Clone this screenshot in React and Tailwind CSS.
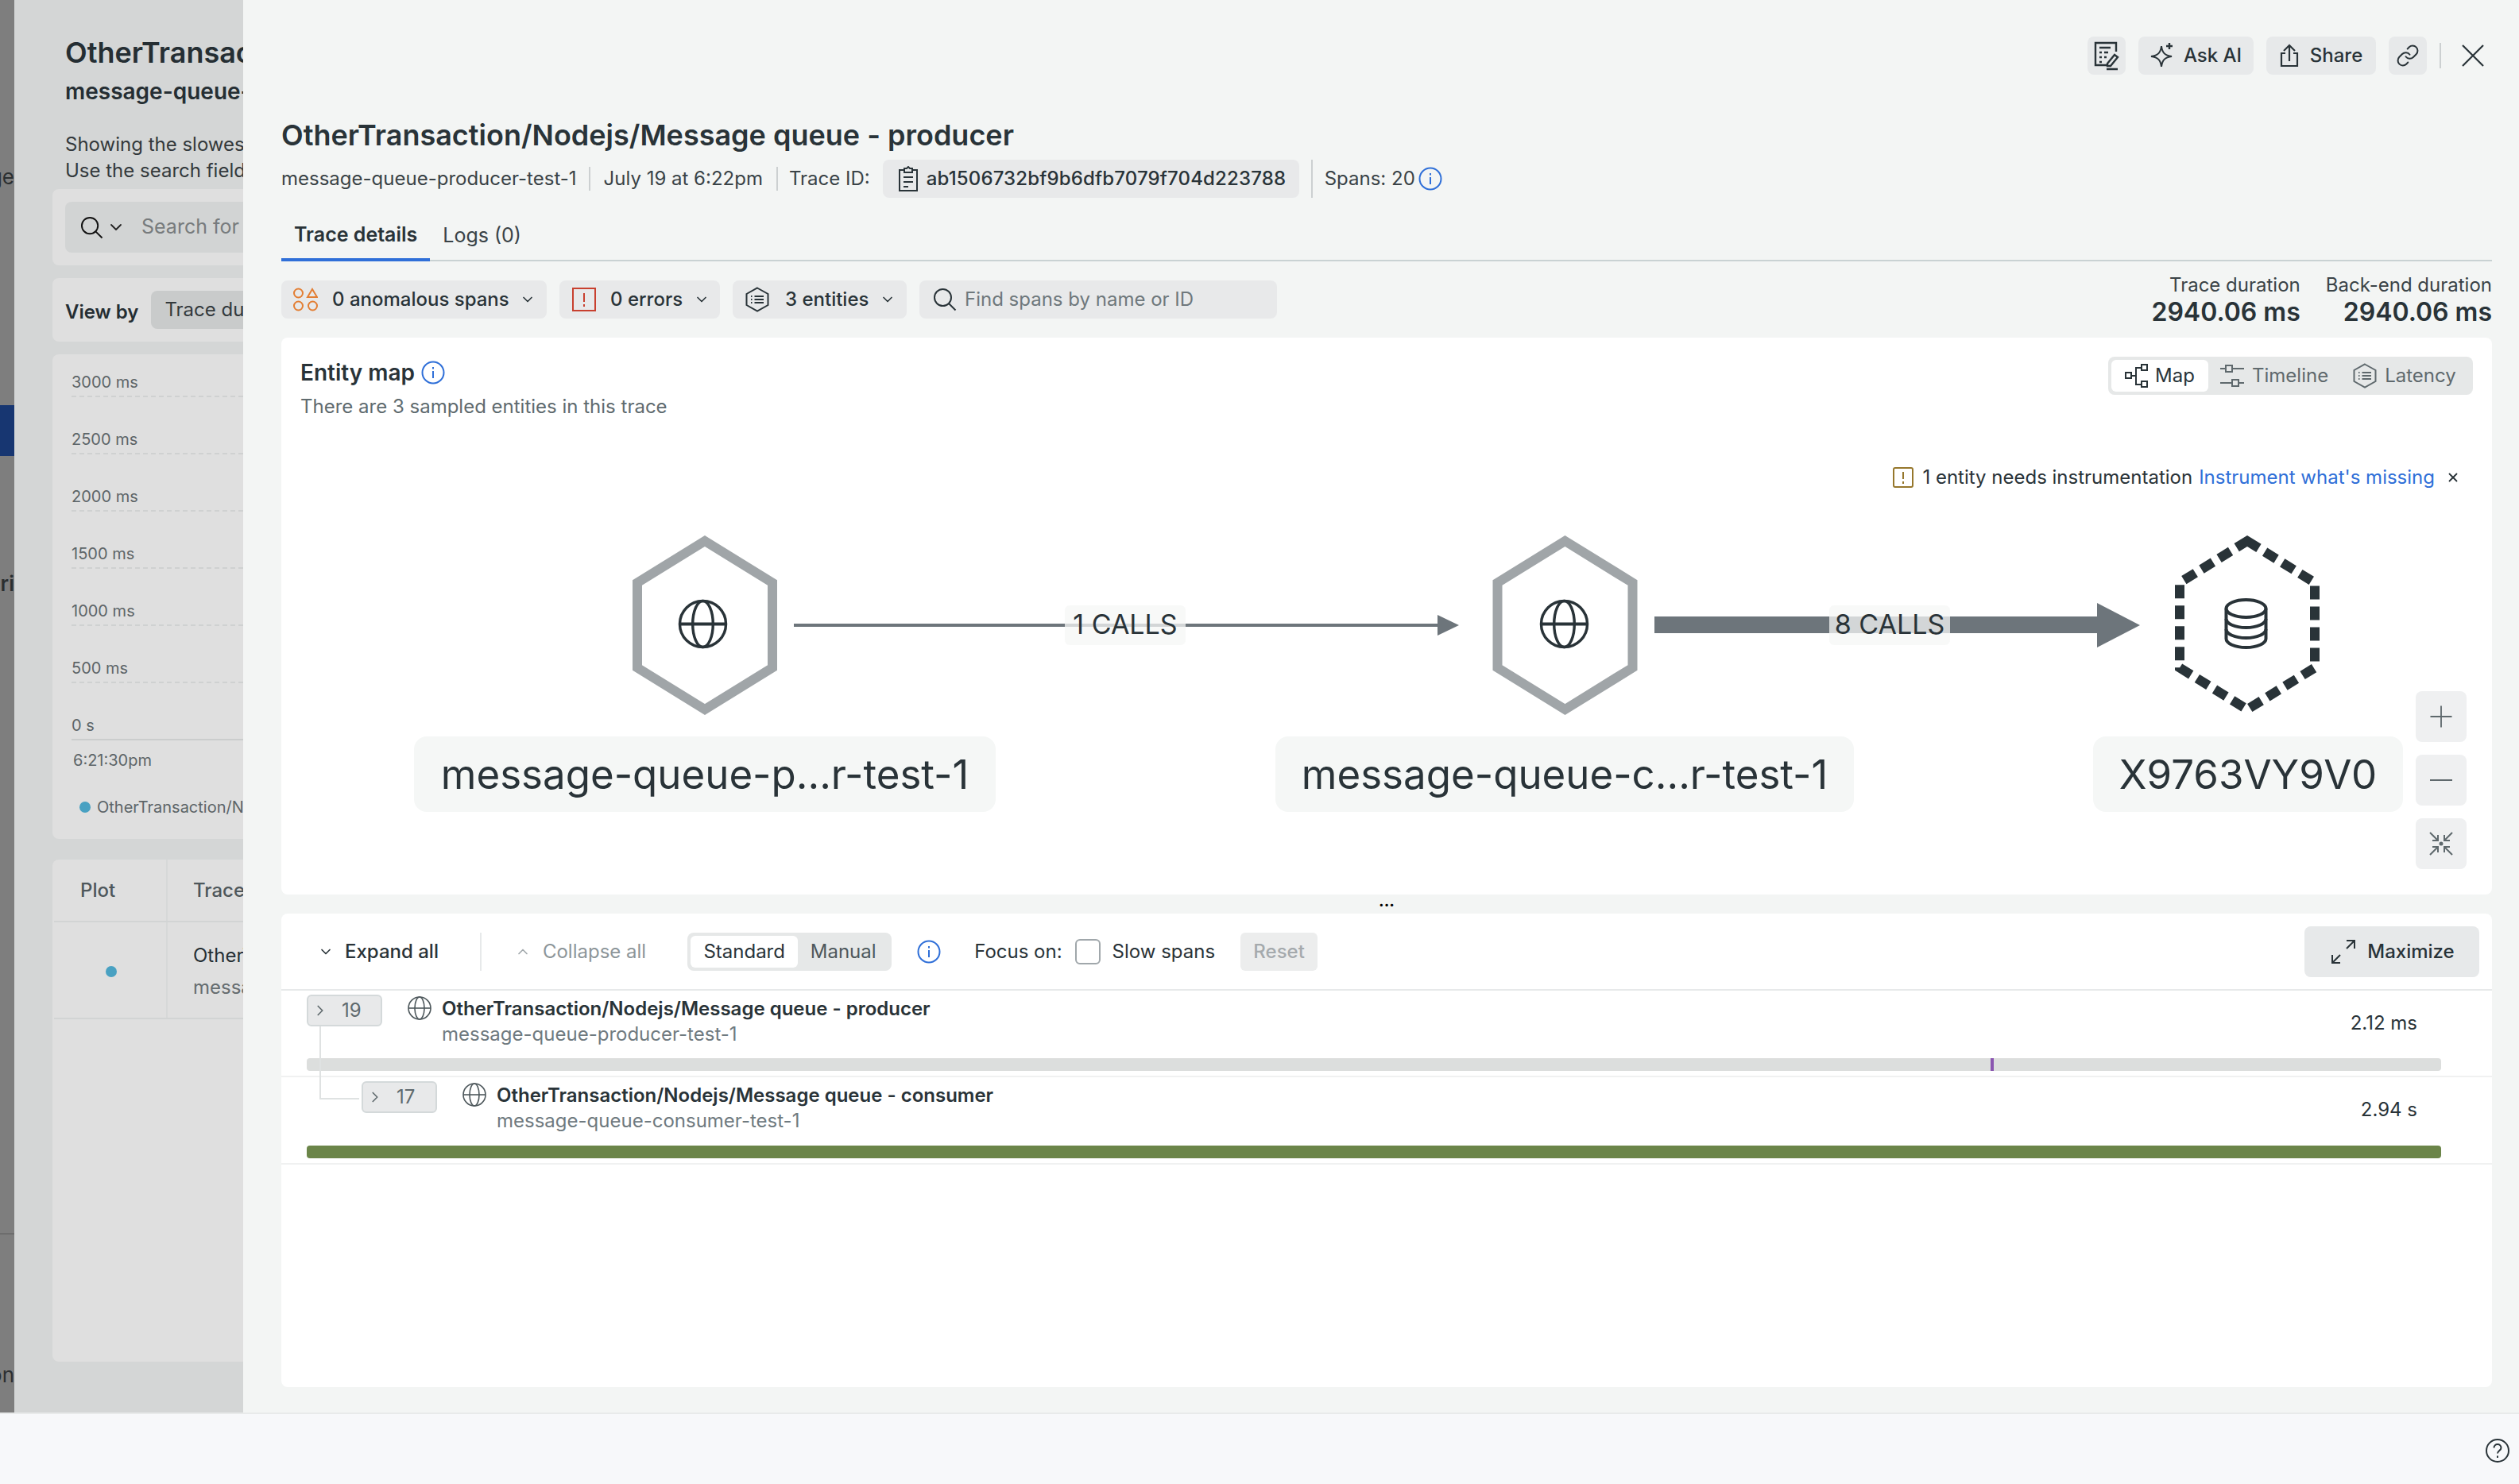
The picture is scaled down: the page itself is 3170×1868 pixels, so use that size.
import { ChevronDown, ChevronRight, ChevronUp, Link as LinkIcon, Plus, X } from "lucide-react";

const INK = "#293338";

function Globe({ size = 63, stroke = 3.5, color = INK, x = 0, y = 0 }) {
  return (
    <svg x={x} y={y} width={size} height={size} viewBox="0 0 64 64" fill="none" stroke={color} strokeWidth={stroke}>
      <circle cx="32" cy="32" r="29.5" />
      <ellipse cx="32" cy="32" rx="13" ry="29.5" />
      <path d="M2.5 32h59" strokeWidth={stroke * 1.2} />
    </svg>
  );
}

function Hexlist({ className = "h-[32px] w-[30px]", color = INK }) {
  return (
    <svg className={className} viewBox="0 0 30 32" fill="none" stroke={color} strokeWidth="2">
      <path d="M15 1.5 28.5 9v14L15 30.5 1.5 23V9z" />
      <path d="M7 12h1.5M7 16h1.5M7 20h1.5M11.5 12H23M11.5 16H23M11.5 20H23" strokeWidth="1.8" />
    </svg>
  );
}

function SearchIcon({ className = "h-[30px] w-[30px]", color = INK, stroke = 2 }) {
  return (
    <svg className={className} viewBox="0 0 30 30" fill="none" stroke={color} strokeWidth={stroke}>
      <circle cx="12.5" cy="12.5" r="10.5" />
      <path d="m20 20 8.5 8.5" />
    </svg>
  );
}

function InfoIcon({ className = "h-[30px] w-[30px]" }) {
  return (
    <svg className={className} viewBox="0 0 30 30" fill="none" stroke="#2f6fd8" strokeWidth="2">
      <circle cx="15" cy="15" r="13.5" />
      <path d="M15 13v9M15 8v2.5" />
    </svg>
  );
}

function HeaderButton({ children, className = "" }) {
  return <div className={`flex h-[48px] items-center justify-center rounded-lg bg-[#e7e9ea] text-[24px] font-medium ${className}`}>{children}</div>;
}

function FilterPill({ children, className = "" }) {
  return <div className={`flex h-[48px] items-center rounded-lg bg-[#e8e9ea] text-[24px] font-medium ${className}`}>{children}</div>;
}

function LeftPanel() {
  const ticks = ["3000 ms", "2500 ms", "2000 ms", "1500 ms", "1000 ms", "500 ms"];
  return (
    <div className="h-full w-[288px] shrink-0 overflow-hidden bg-[#d4d6d6] pl-[48px]">
      <div className="w-[900px]">
        <div className="pl-[16px]">
          <div className="mt-[44px] text-[36px] leading-[44px] font-semibold whitespace-nowrap text-[#252e33]">OtherTransaction/Nodejs/Message queue</div>
          <div className="mt-[9px] text-[28px] leading-[36px] font-semibold whitespace-nowrap text-[#252e33]">message-queue-producer-test-1</div>
          <div className="mt-[32px] text-[24px] leading-[33px] whitespace-nowrap text-[#33393c]">Showing the slowest traces</div>
          <div className="text-[24px] leading-[33px] whitespace-nowrap text-[#33393c]">Use the search field to find traces</div>
        </div>
        <div className="mt-[7px] h-[96px] rounded-l-lg bg-[#dfdfdf] pt-[16px] pl-[16px]">
          <div className="flex h-[64px] items-center rounded-l-lg bg-[#d2d4d4] pl-[19px]">
            <SearchIcon className="h-[29px] w-[29px]" color="#111" />
            <ChevronDown className="ml-[4px] h-[24px] w-[24px]" color="#222" strokeWidth={1.8} />
            <span className="ml-[20px] text-[25px] text-[#777b7d]">Search for traces</span>
          </div>
        </div>
        <div className="mt-[16px] flex h-[80px] items-center rounded-l-lg bg-[#dfdfdf] pl-[16px]">
          <span className="pt-[6px] text-[24px] font-semibold text-[#252e33]">View by</span>
          <div className="ml-[16px] flex h-[48px] flex-1 items-center rounded-lg bg-[#c9cbcb] pl-[17px] text-[24px] text-[#33393c]">Trace duration</div>
        </div>
        <div className="mt-[16px] h-[610px] rounded-l-lg bg-[#dfdfdf] pl-[24px]">
          {ticks.map((t, i) => (
            <div key={t} className={`flex flex-col justify-end border-b-2 border-dashed border-[#cfd1d1] pb-[2px] text-[20px] leading-[30px] text-[#5d6568] ${i === 0 ? "h-[54px]" : "h-[72px]"}`}>
              {t}
            </div>
          ))}
          <div className="flex h-[72px] flex-col justify-end border-b-2 border-[#cbcdcd] pb-[2px] text-[20px] leading-[30px] text-[#5d6568]">0 s</div>
          <div className="mt-[10px] pl-[2px] text-[20px] leading-[30px] text-[#5d6568]">6:21:30pm</div>
          <div className="mt-[29px] flex items-center pl-[10px] text-[20px] leading-[30px] text-[#5d6568]">
            <span className="h-[14px] w-[14px] rounded-full bg-[#49a1c2]" />
            <span className="ml-[8px]">OtherTransaction/Nodejs/Message queue</span>
          </div>
        </div>
        <div className="mt-[26px] h-[632px] rounded-l-lg bg-[#dfdfdf] pl-[2px]">
          <div className="flex h-[79px] border-b-2 border-[#d2d4d4]">
            <div className="flex w-[143px] items-center border-r-2 border-[#d6d8d8] pl-[33px] text-[24px] font-medium text-[#4e575b]">Plot</div>
            <div className="flex items-center pl-[32px] text-[24px] font-medium text-[#4e575b]">Trace</div>
          </div>
          <div className="flex h-[122px] border-b-2 border-[#d2d4d4]">
            <div className="flex w-[143px] items-center justify-center border-r-2 border-[#d6d8d8] pt-[4px] pl-[2px]">
              <span className="h-[14px] w-[14px] rounded-full bg-[#49a1c2]" />
            </div>
            <div className="pt-[22px] pl-[32px] text-[24px] leading-[40px]">
              <div className="text-[#252e33]">OtherTransaction</div>
              <div className="text-[#666d70]">message-queue</div>
            </div>
          </div>
        </div>
      </div>
    </div>
  );
}

function Backdrop() {
  return (
    <div className="flex h-full w-[18px] shrink-0 flex-col items-end overflow-hidden bg-[#7e7e7e] text-[26px] leading-[32px] text-[#2b2f31]">
      <div className="mt-[207px] h-[32px]">age</div>
      <div className="mt-[271px] h-[64px] w-full shrink-0 bg-[#173671]" />
      <div className="mt-[145px] h-[32px] font-semibold">ori</div>
      <div className="mt-[801px] h-[2px] w-full shrink-0 bg-[#6d6d6d]" />
      <div className="mt-[161px] h-[32px]">on</div>
    </div>
  );
}

function DrawerHeader() {
  return (
    <div className="flex h-[48px] items-center justify-end pr-[10px]">
      <HeaderButton className="w-[48px]">
        <svg className="h-[38px] w-[32px]" viewBox="0 0 32 38" fill="none" stroke={INK} strokeWidth="2.4">
          <path d="M28 14V3H2v28h14M7 9h14M7 15h3M13 15h5M7 21h3M13 21h3M7 27h3" />
          <path d="m17 29 9-11 4 3-9 11h-4zM16 36h14" />
        </svg>
      </HeaderButton>
      <HeaderButton className="ml-[16px] w-[145px] gap-[12px]">
        <svg className="h-[34px] w-[30px]" viewBox="0 0 30 34" fill="none" stroke={INK} strokeWidth="2">
          <path d="M14 5c1 8 4 12 13 13-9 1-12 5-13 13-1-8-4-12-13-13 9-1 12-5 13-13z" />
          <path d="M24 1v8M20 5h8" strokeWidth="2.4" />
        </svg>
        Ask AI
      </HeaderButton>
      <HeaderButton className="ml-[16px] w-[138px] gap-[14px]">
        <svg className="h-[30px] w-[24px]" viewBox="0 0 24 30" fill="none" stroke={INK} strokeWidth="2.2">
          <path d="M7 12H2v16h20V12h-5M12 22V2M5 9l7-7 7 7" />
        </svg>
        Share
      </HeaderButton>
      <HeaderButton className="ml-[16px] w-[48px]">
        <LinkIcon className="h-[30px] w-[30px]" color={INK} strokeWidth={1.6} />
      </HeaderButton>
      <span className="ml-[16px] h-[32px] border-l-2 border-[#ccd0d1]" />
      <svg className="ml-[26px] h-[28px] w-[28px]" viewBox="0 0 28 28" fill="none" stroke={INK} strokeWidth="2.2">
        <path d="m1 1 26 26M27 1 1 27" />
      </svg>
    </div>
  );
}

function TraceMeta() {
  return (
    <div className="mt-[9px] flex h-[48px] items-center text-[24px] text-[#3a4347]">
      <span>message-queue-producer-test-1</span>
      <span className="ml-[15px] h-[30px] border-l-2 border-[#ccd0d1]" />
      <span className="ml-[17px]">July 19 at 6:22pm</span>
      <span className="ml-[17px] h-[30px] border-l-2 border-[#ccd0d1]" />
      <span className="ml-[14px]">Trace ID:</span>
      <div className="ml-[16px] flex h-[48px] w-[524px] items-center rounded-lg bg-[#e8e9ea] pl-[20px] font-medium tracking-[0.15px] text-[#293338]">
        <svg className="h-[32px] w-[24px]" viewBox="0 0 24 32" fill="none" stroke={INK} strokeWidth="2">
          <path d="M7 5H1v26h22V5h-6M7 3h3l2-2 2 2h3v5H7zM6 14h12M6 20h12M6 26h6" />
        </svg>
        <span className="ml-[11px]">ab1506732bf9b6dfb7079f704d223788</span>
      </div>
      <span className="ml-[15px] h-[48px] border-l-2 border-[#ccd0d1]" />
      <span className="ml-[15px]">Spans: 20</span>
      <InfoIcon className="ml-[4px] h-[30px] w-[30px]" />
    </div>
  );
}

function Tabs() {
  return (
    <div className="mt-[16px] flex h-[64px] border-b-2 border-[#c9d2d3] pt-[1px] text-[25px]">
      <div className="-mb-[2px] flex items-center border-b-4 border-[#2f6fd8] px-[16px] font-semibold text-[#293338]">Trace details</div>
      <div className="flex items-center px-[16px] text-[#3a4347]">Logs (0)</div>
    </div>
  );
}

function FilterRow() {
  return (
    <div className="flex h-[96px] justify-between">
      <div className="flex gap-[16px] pt-[24px]">
        <FilterPill className="w-[334px] pl-[15px]">
          <svg className="h-[30px] w-[31px]" viewBox="0 0 31 30" fill="none" stroke="#e37e33" strokeWidth="2">
            <circle cx="6.5" cy="7" r="5.5" />
            <path d="M24 2l6 10H18z" />
            <circle cx="6.5" cy="23" r="5.5" />
            <circle cx="24.5" cy="23" r="5.5" />
          </svg>
          <span className="ml-[18px]">0 anomalous spans</span>
          <ChevronDown className="ml-[13px] h-[20px] w-[20px]" strokeWidth={2} />
        </FilterPill>
        <FilterPill className="w-[202px] pl-[16px]">
          <svg className="h-[30px] w-[30px]" viewBox="0 0 30 30" fill="none" stroke="#c8402f" strokeWidth="2">
            <path d="M1 1h28v28H1z" />
            <path d="M15 7v11M15 21v3" />
          </svg>
          <span className="ml-[18px]">0 errors</span>
          <ChevronDown className="ml-[14px] h-[20px] w-[20px]" strokeWidth={2} />
        </FilterPill>
        <FilterPill className="w-[219px] pl-[16px]">
          <Hexlist />
          <span className="ml-[20px]">3 entities</span>
          <ChevronDown className="ml-[14px] h-[20px] w-[20px]" strokeWidth={2} />
        </FilterPill>
        <FilterPill className="w-[450px] pl-[17px] font-normal text-[#6f787c]">
          <SearchIcon className="h-[30px] w-[30px]" />
          <span className="ml-[10px]">Find spans by name or ID</span>
        </FilterPill>
      </div>
      <div className="flex gap-[32px] pt-[15px] text-right text-[#293338]">
        <div>
          <div className="text-[24px] leading-[30px] text-[#3a4347]">Trace duration</div>
          <div className="text-[32px] leading-[38px] font-semibold">2940.06 ms</div>
        </div>
        <div>
          <div className="text-[24px] leading-[30px] text-[#3a4347]">Back-end duration</div>
          <div className="text-[32px] leading-[38px] font-semibold">2940.06 ms</div>
        </div>
      </div>
    </div>
  );
}

function ViewSwitch() {
  return (
    <div className="flex h-[48px] w-[459px] items-center rounded-lg bg-[#e6e8e8] p-[4px] text-[24px] text-[#5f696d]">
      <div className="flex h-[40px] w-[122px] items-center justify-center gap-[8px] rounded-md bg-white text-[#293338]">
        <svg className="h-[30px] w-[30px]" viewBox="0 0 30 30" fill="none" stroke={INK} strokeWidth="2">
          <path d="M1 11h7v7H1zM21 1h7v7h-7zM21 22h7v7h-7zM8 15h6M21 5h-7v21h7" />
        </svg>
        Map
      </div>
      <div className="ml-[15px] flex items-center gap-[10px]">
        <svg className="h-[28px] w-[30px]" viewBox="0 0 30 28" fill="none" stroke="#5f696d" strokeWidth="2">
          <path d="M7 1h8v8H7zM15 5h15M0 5h7M15 19h8v8h-8zM0 23h15M23 23h7" />
        </svg>
        Timeline
      </div>
      <div className="ml-[31px] flex items-center gap-[10px]">
        <Hexlist color="#5f696d" />
        Latency
      </div>
    </div>
  );
}

function EntityGraph() {
  return (
    <div className="relative flex-1">
      <svg className="absolute inset-0 h-full w-full" viewBox="354 640 2782 486" fill="none">
        <path d="M999 787h815" stroke="#6d757b" strokeWidth="4" />
        <path d="M1809 774l27 13-27 13z" fill="#6d757b" />
        <path d="M2082 786.5h560" stroke="#6d757b" strokeWidth="21" />
        <path d="M2639 759l54 28-54 28z" fill="#6d757b" />
        <path d="M887 681l85 52.500v107L887 893l-85-52.500v-107z" stroke="#a0a5a8" strokeWidth="12" />
        <path d="M1969.500 681l85 52.500v107l-85 52.500-85-52.500v-107z" stroke="#a0a5a8" strokeWidth="12" />
        <path d="M2828 681l85 52.500v107L2828 893l-85-52.500v-107z" stroke="#293338" strokeWidth="12" strokeDasharray="17 9" />
        <Globe x={853} y={754} />
        <Globe x={1937} y={754} />
        <svg x="2799" y="753" width="55" height="64" viewBox="0 0 55 64" fill="none" stroke={INK} strokeWidth="4">
          <ellipse cx="27.500" cy="13" rx="25" ry="11" />
          <path d="M2.500 13v38c0 6 11 11 25 11s25-5 25-11V13" />
          <path d="M2.500 26c0 6 11 11 25 11s25-5 25-11M2.500 39c0 6 11 11 25 11s25-5 25-11" />
        </svg>
      </svg>
      <div className="absolute top-[122px] left-[986px] flex h-[50px] w-[152px] items-center justify-center rounded-md bg-[#f5f7f6]/75 pb-[3px] text-[34px] text-[#293338]">1 CALLS</div>
      <div className="absolute top-[122px] left-[1948px] flex h-[50px] w-[152px] items-center justify-center rounded-md bg-[#f5f7f6]/75 pb-[3px] text-[34px] text-[#293338]">8 CALLS</div>
      <div className="absolute top-[287px] left-[167px] flex h-[95px] w-[732px] items-center justify-center rounded-2xl bg-[#f5f7f6] pt-[2px] text-[51px] text-[#293338]">message-queue-p...r-test-1</div>
      <div className="absolute top-[287px] left-[1251px] flex h-[95px] w-[728px] items-center justify-center rounded-2xl bg-[#f5f7f6] pt-[2px] text-[51px] text-[#293338]">message-queue-c...r-test-1</div>
      <div className="absolute top-[287px] left-[2280px] flex h-[95px] w-[390px] items-center justify-center rounded-2xl bg-[#f5f7f6] pt-[2px] text-[51px] text-[#293338]">X9763VY9V0</div>
      <div className="absolute top-[230px] right-[32px] flex flex-col gap-[16px]">
        <div className="flex h-[64px] w-[64px] items-center justify-center rounded-lg bg-[#eff0f1]">
          <Plus className="h-[44px] w-[44px]" color="#5f696d" strokeWidth={1} />
        </div>
        <div className="flex h-[64px] w-[64px] items-center justify-center rounded-lg bg-[#eff0f1]">
          <span className="w-[28px] border-t-2 border-[#5f696d]" />
        </div>
        <div className="flex h-[64px] w-[64px] items-center justify-center rounded-lg bg-[#eff0f1]">
          <svg className="h-[30px] w-[30px]" viewBox="0 0 30 30" fill="none" stroke="#5f696d" strokeWidth="2">
            <path d="M1 1l10 10M11 4v7H4M29 1 19 11M19 4v7h7M1 29l10-10M11 26v-7H4M29 29 19 19M19 26v-7h7" />
            <circle cx="15" cy="15" r="1.500" fill="#5f696d" />
          </svg>
        </div>
      </div>
    </div>
  );
}

function EntityMap() {
  return (
    <div className="flex h-[701px] flex-col rounded-lg bg-white">
      <div className="flex h-[155px] justify-between px-[24px] pt-[24px]">
        <div>
          <div className="flex h-[40px] items-center gap-[8px] text-[28px] font-semibold text-[#293338]">
            Entity map
            <InfoIcon />
          </div>
          <div className="mt-[3px] text-[24px] leading-[40px] text-[#5f6b6f]">There are 3 sampled entities in this trace</div>
        </div>
        <ViewSwitch />
      </div>
      <div className="flex h-[60px] items-center justify-end pr-[40px] pb-[18px] text-[24px] text-[#293338]">
        <svg className="h-[26px] w-[26px]" viewBox="0 0 26 26" fill="none" stroke="#96772c" strokeWidth="2">
          <rect x="1" y="1" width="24" height="24" rx="2" />
          <path d="M13 6v9M13 18v3" />
        </svg>
        <span className="ml-[11px]">1 entity needs instrumentation</span>
        <span className="ml-[8px] text-[#2f6fd8]">Instrument what's missing</span>
        <X className="ml-[14px] h-[18px] w-[18px]" color={INK} strokeWidth={2.4} />
      </div>
      <EntityGraph />
    </div>
  );
}

function TraceToolbar() {
  return (
    <div className="flex h-[97px] items-center border-b-2 border-[#e7e9ea] text-[24px] text-[#293338]">
      <ChevronDown className="ml-[46px] h-[20px] w-[20px]" strokeWidth={2} />
      <span className="ml-[14px] font-medium">Expand all</span>
      <span className="ml-[52px] h-[48px] border-l-2 border-[#e7e9ea]" />
      <ChevronUp className="ml-[42px] h-[20px] w-[20px]" color="#a0a7ab" strokeWidth={2} />
      <span className="ml-[15px] text-[#8d969a]">Collapse all</span>
      <div className="ml-[52px] flex h-[48px] w-[257px] items-center rounded-lg bg-[#e6e8e8] p-[4px]">
        <div className="flex h-[40px] w-[135px] items-center justify-center rounded-md bg-white">Standard</div>
        <div className="flex flex-1 items-center justify-center text-[#4e585c]">Manual</div>
      </div>
      <InfoIcon className="ml-[32px] h-[30px] w-[30px]" />
      <span className="ml-[42px]">Focus on:</span>
      <span className="ml-[16px] h-[32px] w-[32px] rounded-md border-2 border-[#a0a7ab] bg-white" />
      <span className="ml-[15px]">Slow spans</span>
      <div className="ml-[32px] flex h-[48px] w-[97px] items-center justify-center rounded-md bg-[#eceded] font-medium text-[#a5aaad]">Reset</div>
      <div className="mr-[16px] ml-auto flex h-[64px] w-[220px] items-center justify-center gap-[14px] rounded-lg bg-[#e7e9ea] pl-[2px] font-medium">
        <svg className="h-[32px] w-[32px]" viewBox="0 0 32 32" fill="none" stroke={INK} strokeWidth="2">
          <path d="M20 2h10v10M30 2 20 12M2 20v10h10M2 30l10-10" />
        </svg>
        Maximize
      </div>
    </div>
  );
}

function SpanRow({ count, title, service, time, indent, barColor, tick, topH }) {
  return (
    <div className="border-b-2 border-[#f0f1f1]">
      <div className="flex justify-between pr-[94px]" style={{ height: topH, paddingLeft: indent }}>
        <div className="flex">
          <div className="mt-[5px] flex h-[40px] w-[95px] items-center rounded-md border-2 border-[#d4d9da] bg-[#e8e9ea] pl-[4px] text-[24px] text-[#5f696d]">
            <ChevronRight className="h-[22px] w-[22px]" strokeWidth={1.8} />
            <span className="ml-[16px]">{count}</span>
          </div>
          <svg className="mt-[7px] ml-[32px] h-[30px] w-[30px]" viewBox="0 0 30 30" fill="none" stroke="#4e585c" strokeWidth="1.6">
            <circle cx="15" cy="15" r="14" />
            <ellipse cx="15" cy="15" rx="6" ry="14" />
            <path d="M1 15h28" />
          </svg>
          <div className="ml-[13px]">
            <div className="mt-[5px] text-[24px] leading-[36px] font-semibold text-[#293338]">{title}</div>
            <div className="text-[24px] leading-[28px] text-[#6f7a7f]">{service}</div>
          </div>
        </div>
        <div className="pt-[27px] text-[24px] leading-[28px] text-[#293338]">{time}</div>
      </div>
      <div className="mr-[64px] mb-[6px] ml-[32px] h-[16px] rounded-sm" style={{ backgroundColor: barColor }}>
        {tick && <div className="ml-[2119px] h-full w-[4px] bg-[#8a56b0]" />}
      </div>
    </div>
  );
}

function TracePanel() {
  return (
    <div className="h-[596px] rounded-lg bg-white">
      <TraceToolbar />
      <div className="relative">
        <SpanRow count="19" title="OtherTransaction/Nodejs/Message queue - producer" service="message-queue-producer-test-1" time="2.12 ms" indent={32} barColor="#dcdedd" tick topH={85} />
        <SpanRow count="17" title="OtherTransaction/Nodejs/Message queue - consumer" service="message-queue-consumer-test-1" time="2.94 s" indent={101} barColor="#6b8549" topH={86} />
        <div className="absolute top-[45px] left-[48px] h-[92px] w-[50px] border-b-2 border-l-2 border-[#dfe2e2]" />
      </div>
    </div>
  );
}

export default function App() {
  return (
    <div className="flex h-[1868px] w-[3170px] flex-col overflow-hidden bg-[#f7f8fa] font-['Inter',sans-serif] text-[#293338]">
      <div className="flex h-[1778px] shrink-0">
        <Backdrop />
        <LeftPanel />
        <div className="flex-1 bg-[#f3f5f4] pt-[46px] pr-[34px] pl-[48px]">
          <DrawerHeader />
          <div className="mt-[54px] text-[36px] leading-[44px] font-semibold text-[#293338]">OtherTransaction/Nodejs/Message queue - producer</div>
          <TraceMeta />
          <Tabs />
          <FilterRow />
          <EntityMap />
          <div className="flex h-[24px] items-center justify-center text-[20px] leading-none font-bold text-black">
            <span className="-mt-[8px]">...</span>
          </div>
          <TracePanel />
        </div>
      </div>
      <div className="flex flex-1 items-center justify-end border-t-2 border-[#e8eaea] pt-[4px] pr-[12px]">
        <svg className="h-[30px] w-[30px]" viewBox="0 0 30 30" fill="none" stroke={INK} strokeWidth="2">
          <circle cx="15" cy="15" r="14" />
          <path d="M10.500 11.500c0-6 9-6 9 0 0 3.500-4.500 3.500-4.500 7M15 21.500v2.500" />
        </svg>
      </div>
    </div>
  );
}
